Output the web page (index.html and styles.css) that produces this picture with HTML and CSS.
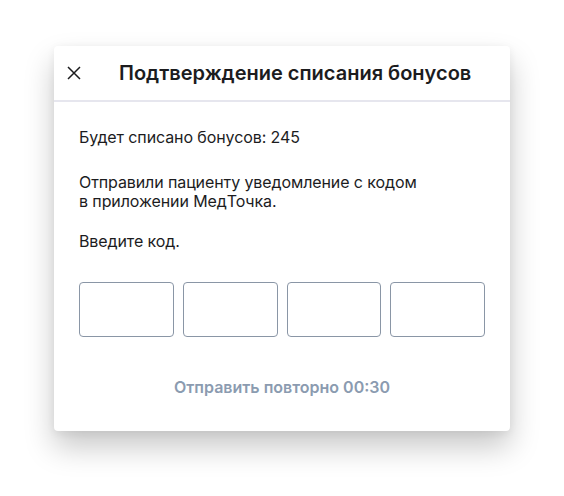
FILE: index.html
```html
<!DOCTYPE html>
<html lang="ru">
<head>
  <meta charset="UTF-8" />
  <meta name="viewport" content="width=device-width, initial-scale=1.0"/>
  <title>Подтверждение списания бонусов</title>
  <link rel="stylesheet" href="styles.css">
</head>
<body>
  <div class="modal">
    <div class="modal-header">
      <button class="close-btn" aria-label="Закрыть">
        <svg width="14" height="14" viewBox="0 0 14 14">
          <path d="M1 1 L13 13 M13 1 L1 13" stroke="#1c1c1e" stroke-width="1.5" fill="none"/>
        </svg>
      </button>
      <h1>Подтверждение списания бонусов</h1>
    </div>

    <div class="modal-body">
      <p class="amount">Будет списано бонусов: 245</p>
      <p class="notice">Отправили пациенту уведомление с кодом<br>в приложении МедТочка.</p>
      <p class="prompt">Введите код.</p>

      <div class="code-inputs">
        <input type="text" maxlength="1" class="code-cell">
        <input type="text" maxlength="1" class="code-cell">
        <input type="text" maxlength="1" class="code-cell">
        <input type="text" maxlength="1" class="code-cell">
      </div>

      <div class="resend">Отправить повторно 00:30</div>
    </div>
  </div>
</body>
</html>
```

FILE: styles.css
```css
body {
  margin: 0;
  padding-bottom: 66px;
  background: #fff;
  font-family: Inter, "Noto Sans", sans-serif;
  color: #1c1c1e;
}

.modal {
  width: 456px;
  margin: 46px 0 0 54px;
  background: #fff;
  border-radius: 4px;
  box-shadow: 0 16px 30px rgba(0, 0, 0, 0.22), 0 2px 8px rgba(0, 0, 0, 0.06);
}

.modal-header {
  display: flex;
  align-items: center;
  height: 54px;
  padding-left: 13px;
  border-bottom: 2px solid #e6e6ee;
}

.close-btn {
  width: 14px;
  height: 14px;
  padding: 0;
  border: 0;
  background: none;
  display: flex;
  cursor: pointer;
}

h1 {
  margin: 0 0 0 38px;
  font-size: 20px;
  font-weight: 600;
}

.modal-body {
  padding: 26px 25px 34px;
  font-size: 16px;
  line-height: 19px;
  letter-spacing: -0.1px;
}

.modal-body p {
  margin: 0;
}

.amount {
  margin-bottom: 26px !important;
}

.notice {
  margin-bottom: 21px !important;
}

.code-inputs {
  display: flex;
  gap: 9px;
  margin-top: 31px;
}

.code-cell {
  flex: 1;
  min-width: 0;
  height: 55px;
  box-sizing: border-box;
  border: 1px solid #8a96a6;
  border-radius: 4px;
  font-size: 20px;
  text-align: center;
}

.resend {
  margin-top: 41px;
  text-align: center;
  font-weight: 600;
  letter-spacing: 0;
  color: #8b9bb0;
}
```
